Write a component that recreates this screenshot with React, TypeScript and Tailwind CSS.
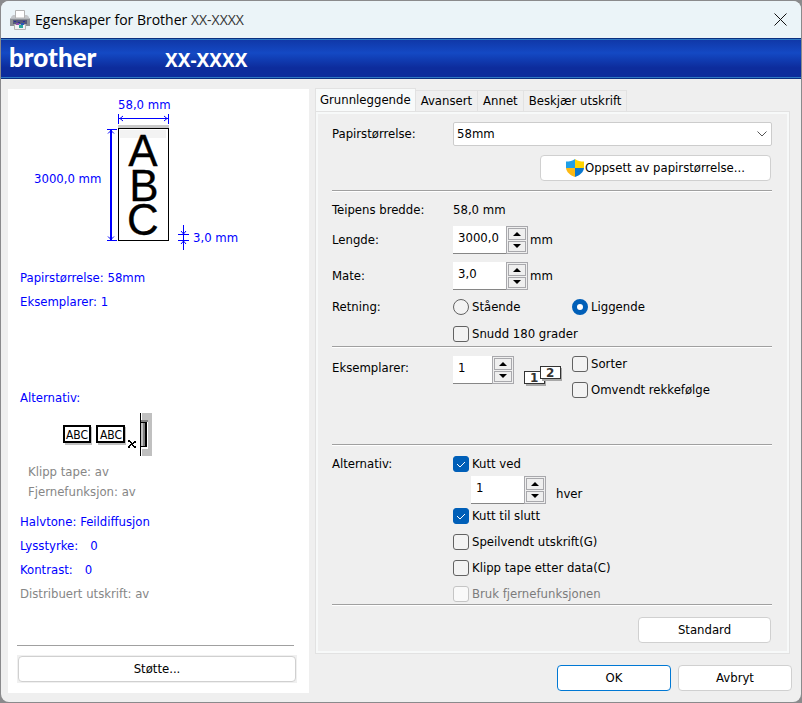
import type { ReactNode } from "react";

function PrinterIcon() {
  return (
    <svg width="20" height="20" viewBox="0 0 20 20" aria-hidden="true">
      <path d="M5.500.5h9V8h-9z" fill="#fff" stroke="#b4b4b4" />
      <path d="M1 7l2-2h2v3h10V5h2l2 2v1H1z" fill="#c4c7ca" />
      <path d="M0 8h20v8H0z" fill="#8d9196" />
      <path d="M0 8h20v1H0z" fill="#b9bcc0" />
      <path d="M3 10h14v4H3z" fill="#55587a" />
      <path d="M4 11h2v1H4zM8 12h2v1H8zM13 11h2v1h-2z" fill="#2b2f9a" />
      <path d="M4.500 14.500h11v5h-11z" fill="#f2f2f2" stroke="#b4b4b4" />
      <path d="M6 13h3v2H6z" fill="#8a4fb0" />
      <path d="M11 13h3v2h-3z" fill="#2d56b8" />
      <path d="M9 15h4v3H9z" fill="#2aa7a0" />
    </svg>
  );
}

function ShieldIcon() {
  return (
    <svg width="18" height="18" viewBox="0 0 18 18" aria-hidden="true">
      <path d="M9 0C6.500 1.800 3.500 2.600 0 2.600V9h9z" fill="#1f9fe6" />
      <path d="M9 0c2.500 1.800 5.500 2.600 9 2.600V9H9z" fill="#ffd400" />
      <path d="M0 9c.4 4 4 7.200 9 9V9z" fill="#fdb913" />
      <path d="M18 9c-.4 4-4 7.200-9 9V9z" fill="#0a78d0" />
    </svg>
  );
}

function LabelPreview() {
  return (
    <svg
      className="w-full"
      height="170"
      viewBox="8 89 301 170"
      preserveAspectRatio="xMinYMin"
      role="img"
      aria-label="58,0 mm x 3000,0 mm"
    >
      <g fill="#0000ff" fontSize="13">
        <text x="118" y="109">58,0 mm</text>
        <text x="34" y="183">3000,0 mm</text>
        <text x="193" y="242">3,0 mm</text>
      </g>

      <g stroke="#0000ff" fill="none" shapeRendering="crispEdges">
        <path d="M118.500 114v10M168.500 114v10M119 118.500h50" />
        <path d="M107 129.500h10M107 240.500h10" />
        <path d="M111 130v110" strokeWidth="2" />
        <path d="M178 234.500h11M178 240.500h11M183.500 225v25" />
      </g>
      <g stroke="#0000ff" fill="none">
        <path d="M123 116l-3 2.500 3 2.500M164 116l3 2.500-3 2.500" />
        <path d="M108 133.500l3-3 3 3M108 236.500l3 3 3-3" />
        <path d="M181 231l2.500 3 2.500-3M181 244l2.500-3 2.500 3" />
      </g>

      <path d="M118 125h51v3h-51z" fill="#c9c9c9" />
      <path
        d="M118.500 128.500h50v112h-50z"
        fill="#fff"
        stroke="#000"
        shapeRendering="crispEdges"
      />
      <path d="M120 130h46v8h-46z" fill="#f3f3f3" />
      <text
        className="font-['Liberation_Sans',sans-serif]"
        fontSize="44"
        textAnchor="middle"
        stroke="#000"
        strokeWidth=".3"
      >
        <tspan x="143" y="166">A</tspan>
        <tspan x="144" y="201">B</tspan>
        <tspan x="143" y="235">C</tspan>
      </text>
    </svg>
  );
}

function CutterPreview() {
  return (
    <svg
      className="ml-[50px]"
      width="96"
      height="44"
      viewBox="58 412 96 44"
      shapeRendering="crispEdges"
      aria-hidden="true"
    >
      <path d="M65 427h27v18H65zM98 427h28v18H98z" fill="#c0c0c0" />
      <path
        d="M64 426h26v16H64zM97 426h27v16H97z"
        fill="#fff"
        stroke="#000"
        strokeWidth="2"
      />
      <g
        className="font-['DejaVu_Sans_Condensed',sans-serif]"
        fontSize="12"
        textAnchor="middle"
      >
        <text x="77" y="439">ABC</text>
        <text x="111" y="439">ABC</text>
      </g>
      <path
        d="M128 440h2v1h1v1h1v1h1v-1h1v-1h2v2h-2v1h-1v1h1v1h2v2h-2v-1h-1v-1h-1v-1h-1v1h-1v2h-2v-2h1v-1h1v-1h1v-1h-1v-1h-2z"
        fill="#000"
      />
      <path d="M142 413h10v43h-10z" fill="#c0c0c0" />
      <path d="M141 420h7v2h-7z" fill="#808080" />
      <path d="M142 422h6v27h-6z" fill="#fff" />
      <path d="M141 422h6v25h-6z" fill="#000" />
      <path d="M141 423h2v23h-2z" fill="#c0c0c0" />
      <path d="M143 423h2v23h-2z" fill="#808080" />
      <path d="M140 413h1v43h-1z" fill="#000" />
    </svg>
  );
}

function CollateIcon() {
  return (
    <svg
      width="38"
      height="20"
      viewBox="0 0 38 20"
      shapeRendering="crispEdges"
      aria-hidden="true"
    >
      <path d="M2 7h20v13H2z" fill="#a8a8a8" />
      <path d="M.5 5.500h20v12H.5z" fill="#fff" stroke="#333" />
      <path d="M18 2h20v13H18z" fill="#a8a8a8" />
      <path d="M16.500.5h20v12h-20z" fill="#fff" stroke="#333" />
      <g
        className="font-['DejaVu_Sans',sans-serif] font-bold"
        fontSize="12"
        fill="#333"
      >
        <text x="6" y="16">1</text>
        <text x="22" y="11">2</text>
      </g>
    </svg>
  );
}

function Separator() {
  return <hr className="h-0.5 border-t border-[#a0a0a0] bg-white" />;
}

type ButtonProps = {
  children: ReactNode;
  className?: string;
};

function Button({ children, className = "border-[#d0d0d0]" }: ButtonProps) {
  return (
    <button
      type="button"
      className={`flex h-[26px] items-center justify-center rounded border bg-white ${className}`}
    >
      {children}
    </button>
  );
}

type SpinnerProps = {
  id: string;
  value: string;
  label?: string;
  width?: string;
};

function Spinner({ id, value, label, width = "w-[53px]" }: SpinnerProps) {
  return (
    <div className="flex h-7">
      <input
        id={id}
        aria-label={label}
        defaultValue={value}
        className={`${width} border-b border-[#868686] bg-white pb-1 pl-[5px] outline-none`}
      />
      <div className="flex w-[22px] flex-col gap-px border border-[#a8a8ac] p-px">
        <button
          type="button"
          aria-label="Opp"
          className="flex flex-1 items-center justify-center border border-[#a8a8ac]"
        >
          <svg width="8" height="4" viewBox="0 0 8 4">
            <path d="M4 0l4 4H0z" />
          </svg>
        </button>
        <button
          type="button"
          aria-label="Ned"
          className="flex flex-1 items-center justify-center border border-[#a8a8ac]"
        >
          <svg width="8" height="4" viewBox="0 0 8 4">
            <path d="M4 4l4-4H0z" />
          </svg>
        </button>
      </div>
    </div>
  );
}

type CheckProps = {
  children: ReactNode;
  checked?: boolean;
  disabled?: boolean;
};

function Checkbox({ children, checked, disabled }: CheckProps) {
  return (
    <label
      className={`flex h-4 items-center gap-[3px] ${disabled ? "text-[#7c7c7c]" : ""}`}
    >
      <span className="grid size-4">
        <input
          type="checkbox"
          defaultChecked={checked}
          disabled={disabled}
          className="peer col-start-1 row-start-1 size-4 appearance-none rounded-[3px] border border-[#626262] bg-[#f3f3f3] checked:border-[#005fb8] checked:bg-[#005fb8] disabled:border-[#c5c5c5] disabled:bg-[#f9f9f9]"
        />
        <svg
          viewBox="0 0 16 16"
          className="pointer-events-none invisible col-start-1 row-start-1 size-4 peer-checked:visible"
        >
          <path d="M4 8l3 3 5-5" fill="none" stroke="#fff" />
        </svg>
      </span>
      {children}
    </label>
  );
}

function Radio({ children, checked }: CheckProps) {
  return (
    <label className="flex h-4 items-center gap-[3px]">
      <input
        type="radio"
        name="direction"
        defaultChecked={checked}
        className="size-4 appearance-none rounded-full border border-[#626262] bg-[#f3f3f3] checked:border-5 checked:border-[#005fb8] checked:bg-white"
      />
      {children}
    </label>
  );
}

function Tab({ children }: { children: ReactNode }) {
  return (
    <button
      type="button"
      role="tab"
      aria-selected="false"
      className="h-[21px] border-t border-r border-[#e2e2e2] px-[5px]"
    >
      {children}
    </button>
  );
}

function Sidebar() {
  return (
    <aside className="flex w-[301px] flex-col bg-white text-[#0000ff]">
      <LabelPreview />
      <div className="flex flex-col gap-2 px-3 pt-[11px]">
        <p>Papirstørrelse: 58mm</p>
        <p>Eksemplarer: 1</p>
      </div>
      <p className="px-3 pt-20">Alternativ:</p>
      <div className="pt-[6px] text-black">
        <CutterPreview />
      </div>
      <div className="flex flex-col gap-1 px-5 pt-2 text-[#868686]">
        <p>Klipp tape: av</p>
        <p>Fjernefunksjon: av</p>
      </div>
      <div className="flex flex-col gap-2 px-3 pt-[14px]">
        <p>Halvtone: Feildiffusjon</p>
        <p className="flex gap-3">
          <span>Lysstyrke:</span>
          <span>0</span>
        </p>
        <p className="flex gap-3">
          <span>Kontrast:</span>
          <span>0</span>
        </p>
        <p className="text-[#868686]">Distribuert utskrift: av</p>
      </div>
      <div className="mt-auto flex flex-col gap-[9px] pr-3 pb-[10px] pl-[9px] text-black">
        <hr className="mr-[3px] border-[#a0a0a0]" />
        <div className="flex flex-col bg-[#f0f0f0] p-px">
          <Button>Støtte...</Button>
        </div>
      </div>
    </aside>
  );
}

function BasicPanel() {
  return (
    <div className="border border-[#e2e2e2] pt-[10px] pr-[17px] pb-[10px] pl-4 inset-ring-2 inset-ring-[#f7f9f9]">
      <div className="flex h-6 items-center">
        <label htmlFor="paper" className="w-[121px]">
          Papirstørrelse:
        </label>
        <div className="grid flex-1 items-center">
          <select
            id="paper"
            className="col-start-1 row-start-1 h-6 appearance-none rounded-[2px] border border-[#cccccc] bg-white px-[3px] outline-none"
          >
            <option>58mm</option>
          </select>
          <svg
            width="10"
            height="6"
            viewBox="0 0 10 6"
            className="pointer-events-none col-start-1 row-start-1 mr-[5px] justify-self-end"
          >
            <path d="M.5.5L5 5 9.500.5" fill="none" stroke="#555" />
          </svg>
        </div>
      </div>
      <div className="flex flex-col items-end py-[9px] pr-px">
        <Button className="w-[231px] border-[#d0d0d0]">
          <ShieldIcon />
          <span className="pl-px">Oppsett av papirstørrelse...</span>
        </Button>
      </div>
      <Separator />

      <div className="mt-2 flex h-5 items-center">
        <span className="w-[121px]">Teipens bredde:</span>
        <span>58,0 mm</span>
      </div>
      <div className="mt-[6px] flex items-center">
        <label htmlFor="length" className="w-[121px]">
          Lengde:
        </label>
        <Spinner id="length" value="3000,0" />
        <span className="pl-0.5">mm</span>
      </div>
      <div className="mt-2 flex items-center">
        <label htmlFor="feed" className="w-[121px]">
          Mate:
        </label>
        <Spinner id="feed" value="3,0" />
        <span className="pl-0.5">mm</span>
      </div>
      <div className="mt-[9px] flex items-center">
        <span className="w-[121px]">Retning:</span>
        <div className="w-[119px]">
          <Radio>Stående</Radio>
        </div>
        <Radio checked>Liggende</Radio>
      </div>
      <div className="mt-[11px] mb-1 pl-[121px]">
        <Checkbox>Snudd 180 grader</Checkbox>
      </div>
      <Separator />

      <div className="flex h-24 items-start pt-2">
        <label htmlFor="copies" className="flex h-6 w-[121px] items-center">
          Eksemplarer:
        </label>
        <Spinner id="copies" value="1" width="w-[39px]" />
        <div className="flex w-[58px] justify-center pt-[10px]">
          <CollateIcon />
        </div>
        <div className="flex flex-col gap-[10px]">
          <Checkbox>Sorter</Checkbox>
          <Checkbox>Omvendt rekkefølge</Checkbox>
        </div>
      </div>
      <Separator />

      <div className="flex pt-[10px]">
        <span className="w-[121px]">Alternativ:</span>
        <div className="flex flex-col">
          <Checkbox checked>Kutt ved</Checkbox>
          <div className="my-1 flex items-center gap-[10px] pl-[18px]">
            <Spinner id="every" value="1" label="Kutt ved hver" />
            <span className="pt-2">hver</span>
          </div>
          <div className="flex flex-col gap-[10px]">
            <Checkbox checked>Kutt til slutt</Checkbox>
            <Checkbox>Speilvendt utskrift(G)</Checkbox>
            <Checkbox>Klipp tape etter data(C)</Checkbox>
            <Checkbox disabled>Bruk fjernefunksjonen</Checkbox>
          </div>
        </div>
      </div>
      <div className="pt-0.5">
        <Separator />
      </div>
      <div className="flex justify-end pt-[11px] pr-px">
        <Button className="w-[133px] border-[#d0d0d0]">Standard</Button>
      </div>
    </div>
  );
}

export default function App() {
  return (
    <div className="min-h-screen bg-[#8a8a8c] p-px font-['DejaVu_Sans_Condensed','DejaVu_Sans',sans-serif] text-[13px] leading-4 text-black">
      <main className="flex min-h-[calc(100vh-2px)] flex-col overflow-hidden rounded-lg bg-[#efefef]">
        <header>
          <div className="flex h-[37px] items-center bg-[#ebf4f8] pr-[14px] pl-[9px]">
            <PrinterIcon />
            <h1 className="flex-1 pl-[5px] font-['Open_Sans',sans-serif] text-[14px]">
              Egenskaper for Brother{" "}
              <span className="text-[#333]">XX-XXXX</span>
            </h1>
            <button type="button" aria-label="Lukk">
              <svg width="13" height="13" viewBox="0 0 13 13">
                <path d="M.5.5l12 12M12.500.5l-12 12" stroke="#111" />
              </svg>
            </button>
          </div>
          <div className="border-y border-[#0a2f80]">
            <div className="flex h-[39px] items-center border-y border-[#2f78c4] bg-linear-to-b from-[#1038a8] via-[#1449c4] via-35% to-[#0d2c9c] to-75% pl-2 text-white">
              <span className="w-[156px] pb-1 font-['Lato',sans-serif] text-[26px] leading-8 font-black">
                brother
              </span>
              <span className="pt-0.5 font-['Noto_Sans',sans-serif] text-[19px] font-bold">
                XX-XXXX
              </span>
            </div>
          </div>
        </header>

        <div className="flex flex-1 gap-1.5 pt-[9px] pr-[9px] pb-[9px] pl-[7px]">
          <div className="flex pt-px">
            <Sidebar />
          </div>
          <div className="flex flex-1 flex-col">
            <div role="tablist" className="flex items-end pr-2">
              <button
                type="button"
                role="tab"
                aria-selected="true"
                className="h-[23px] border-x border-t border-[#e2e2e2] bg-[#f8fafa] px-1"
              >
                Grunnleggende
              </button>
              <Tab>Avansert</Tab>
              <Tab>Annet</Tab>
              <Tab>Beskjær utskrift</Tab>
            </div>
            <div className="pr-0.5">
              <BasicPanel />
            </div>
            <div className="flex justify-end gap-[7px] pt-[11px]">
              <Button className="w-[114px] border-[#0078d4]">OK</Button>
              <Button className="w-[114px] border-[#d0d0d0]">Avbryt</Button>
            </div>
          </div>
        </div>
      </main>
    </div>
  );
}
